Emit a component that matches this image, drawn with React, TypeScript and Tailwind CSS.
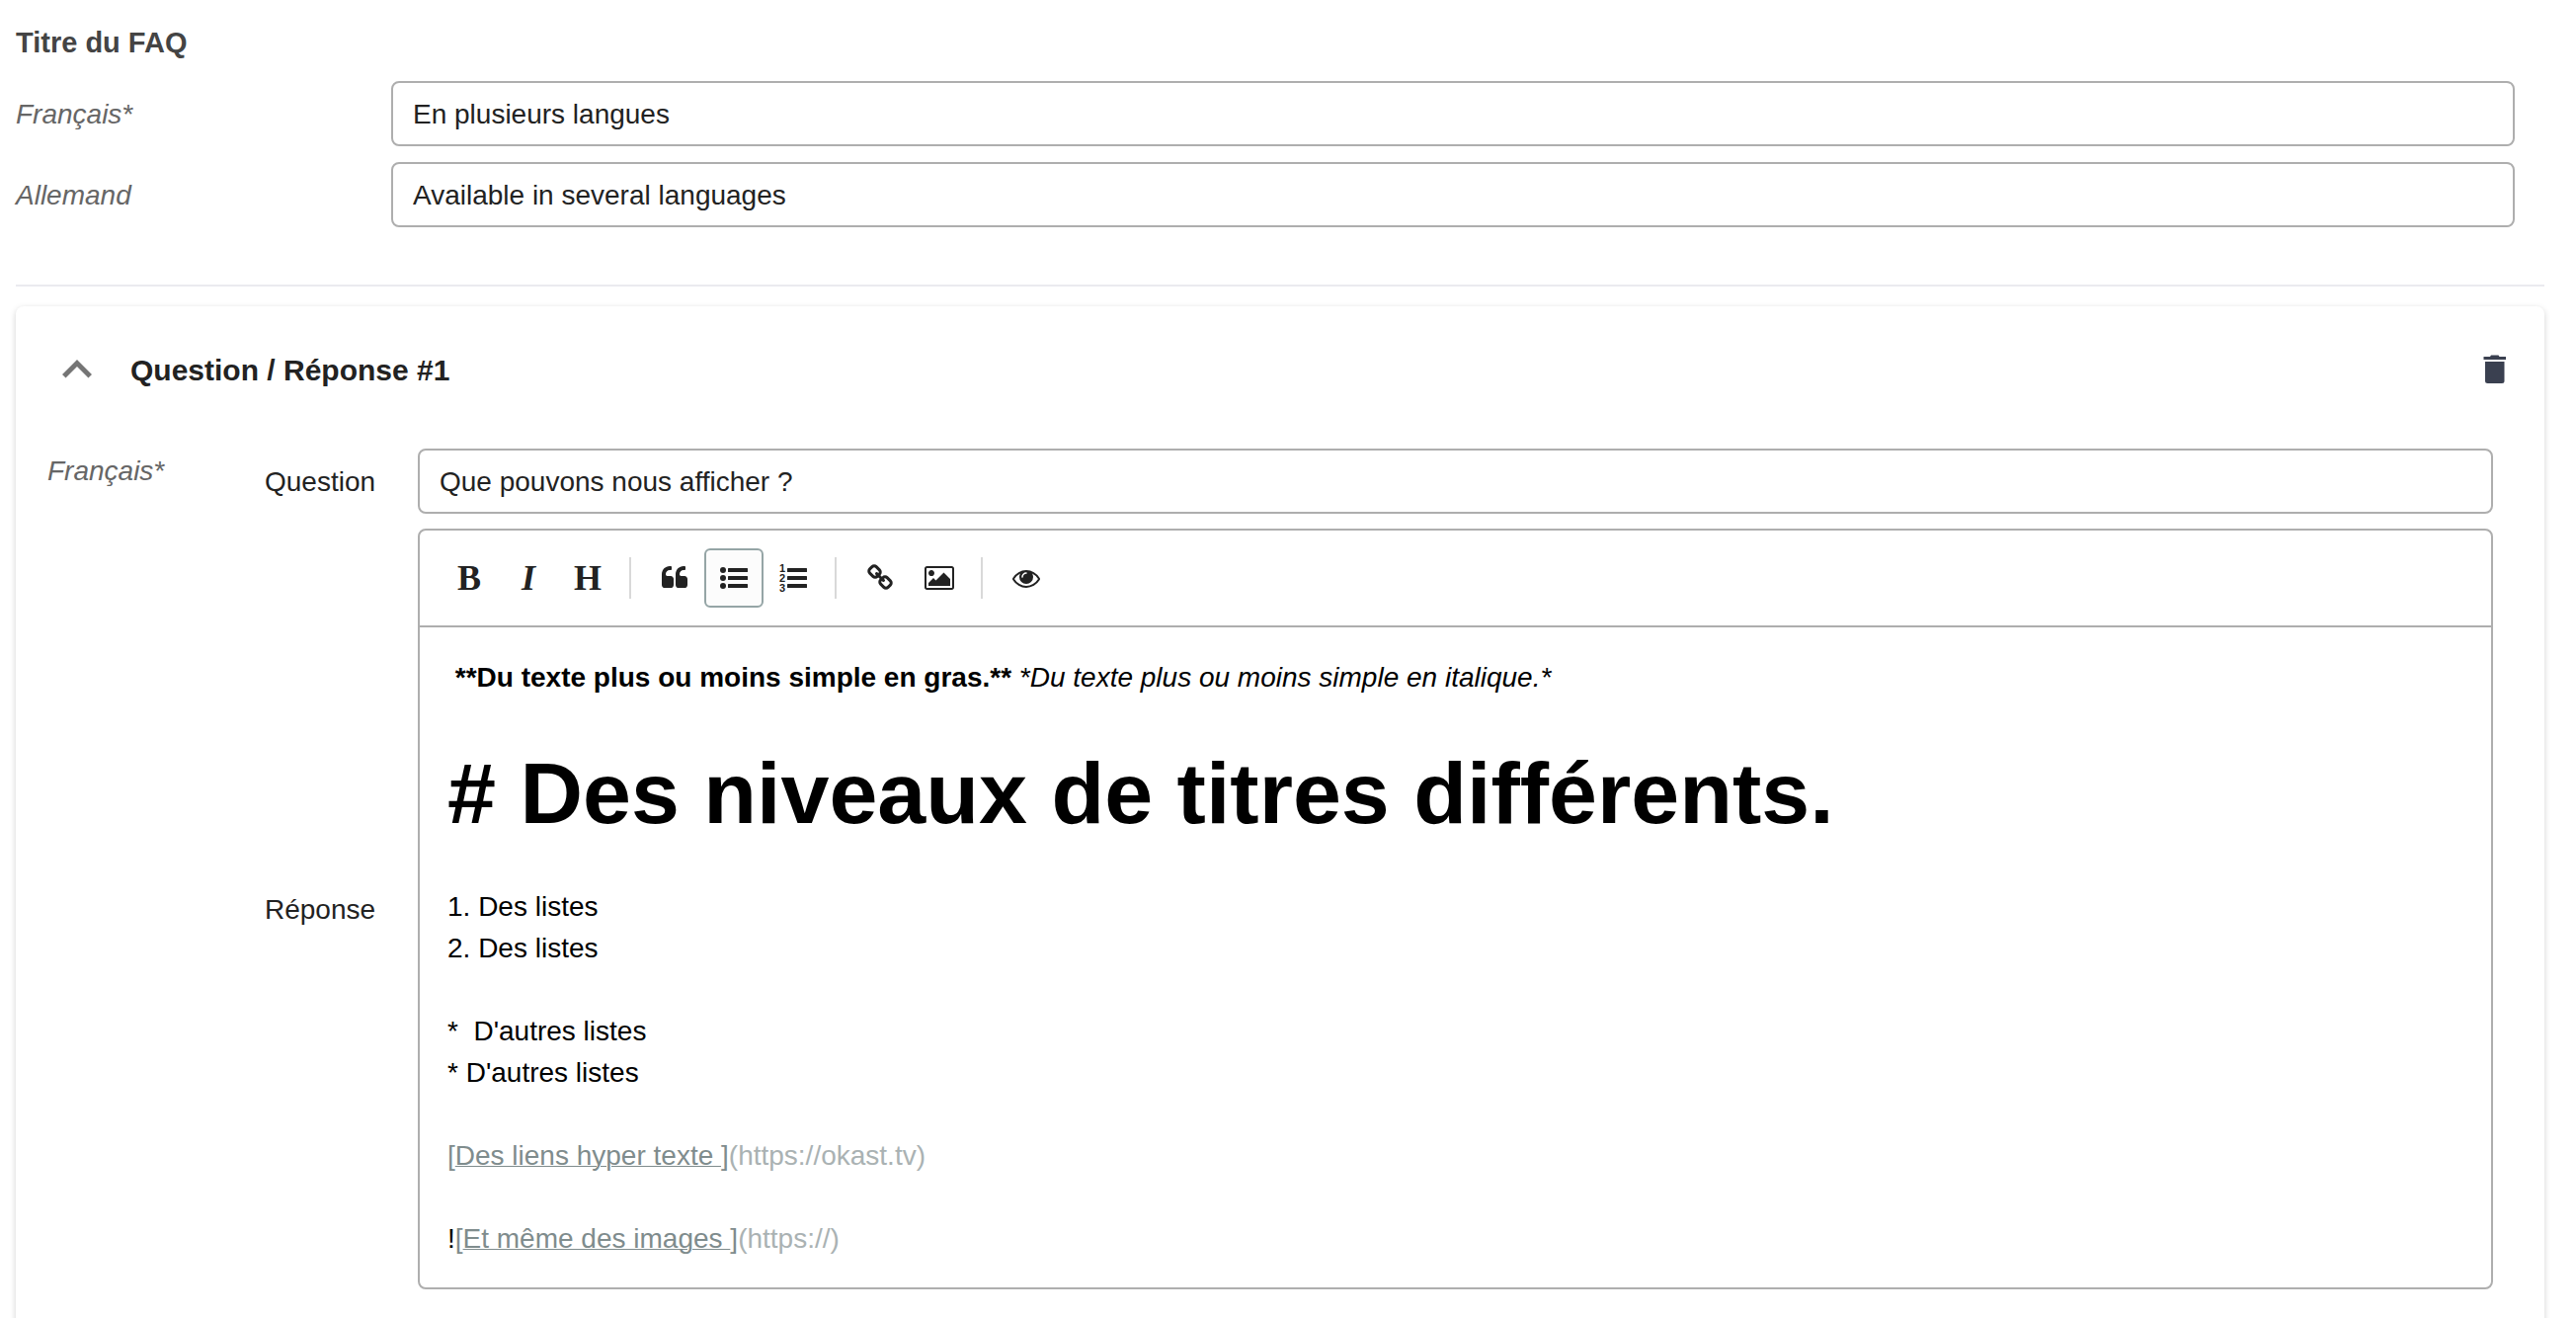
import React, { useState } from 'react';
import { MdKeyboardArrowUp } from 'react-icons/md';

const inputClass =
  'h-[66px] w-full min-w-0 rounded-lg border-2 border-[#aeaeae] bg-white px-5 pt-0.5 text-[28px] text-[#222222] outline-none';

const toolGroups = [
  [
    { id: 'bold', label: 'Gras', icon: <span className="font-['Liberation_Serif',serif] text-4xl font-bold">B</span> },
    { id: 'italic', label: 'Italique', icon: <span className="font-['Liberation_Serif',serif] text-4xl font-bold italic">I</span> },
    { id: 'heading', label: 'Titre', icon: <span className="font-['Liberation_Serif',serif] text-4xl font-bold">H</span> },
  ],
  [
    { id: 'quote', label: 'Citation', icon: <QuoteIcon /> },
    { id: 'ul', label: 'Liste à puces', icon: <BulletListIcon /> },
    { id: 'ol', label: 'Liste numérotée', icon: <NumberListIcon /> },
  ],
  [
    { id: 'link', label: 'Lien', icon: <LinkIcon /> },
    { id: 'image', label: 'Image', icon: <ImageIcon /> },
  ],
  [{ id: 'preview', label: 'Aperçu', icon: <EyeIcon /> }],
];

export default function App() {
  const [title, setTitle] = useState({
    fr: 'En plusieurs langues',
    de: 'Available in several languages',
  });

  return (
    <main className="bg-white pl-4 pr-8 pt-6 font-['Liberation_Sans',Arial,sans-serif] text-[28px] leading-[42px] text-[#222222]">
      <section className="pr-[30px]">
        <h1 className="text-[29px] font-semibold leading-[38px] text-[#444444]">Titre du FAQ</h1>
        <div className="mt-5 flex flex-col gap-4">
          <TitleRow
            id="title-fr"
            label="Français*"
            value={title.fr}
            onChange={fr => setTitle({ ...title, fr })}
          />
          <TitleRow
            id="title-de"
            label="Allemand"
            value={title.de}
            onChange={de => setTitle({ ...title, de })}
          />
        </div>
      </section>

      <hr className="mb-5 mt-[58px] border-t-2 border-[#ebebef]" />

      <QuestionCard />
    </main>
  );
}

type TitleRowProps = {
  id: string;
  label: string;
  value: string;
  onChange: (value: string) => void;
};

function TitleRow({ id, label, value, onChange }: TitleRowProps) {
  return (
    <div className="flex items-center">
      <label htmlFor={id} className="w-[380px] shrink-0 pt-0.5 italic text-[#666666]">
        {label}
      </label>
      <input
        id={id}
        type="text"
        className={inputClass}
        value={value}
        onChange={e => onChange(e.target.value)}
      />
    </div>
  );
}

function QuestionCard() {
  const [question, setQuestion] = useState('Que pouvons nous afficher ?');

  return (
    <section className="rounded-lg pb-16 pl-8 pr-[52px] pt-8 shadow-[0_2px_6px_rgba(0,0,0,0.18)]">
      <header className="flex h-16 items-center">
        <button type="button" aria-label="Replier" className="text-[#757575]">
          <MdKeyboardArrowUp className="size-[60px]" />
        </button>
        <h2 className="ml-6 flex-1 pt-0.5 text-[30px] font-bold">Question / Réponse #1</h2>
        <button type="button" aria-label="Supprimer" className="-mr-3.5 text-[#3a4050]">
          <TrashIcon />
        </button>
      </header>

      <div className="mt-12 flex">
        <p className="w-[220px] shrink-0 pt-0.5 italic text-[#666666]">Français*</p>
        <div className="flex min-w-0 flex-1 flex-col gap-[15px]">
          <div className="flex items-center">
            <label htmlFor="question" className="w-[155px] shrink-0 pt-0.5">
              Question
            </label>
            <input
              id="question"
              type="text"
              className={inputClass}
              value={question}
              onChange={e => setQuestion(e.target.value)}
            />
          </div>
          <div className="flex items-center">
            <span id="answer-label" className="w-[155px] shrink-0 pt-0.5">
              Réponse
            </span>
            <Editor />
          </div>
        </div>
      </div>
    </section>
  );
}

function Editor() {
  const [active, setActive] = useState('ul');

  return (
    <div className="min-w-0 flex-1 rounded-lg border-2 border-[#aeaeae]">
      <div className="flex h-[98px] items-center border-b-2 border-[#aeaeae] px-5">
        {toolGroups.map((group, i) => (
          <React.Fragment key={i}>
            {i > 0 && <span className="ml-3 mr-3.5 h-[42px] w-[2px] bg-[#d9d9d9]" />}
            {group.map(({ id, label, icon }) => (
              <button
                key={id}
                type="button"
                aria-label={label}
                onClick={() => setActive(id)}
                className={
                  active === id
                    ? 'flex size-[60px] items-center justify-center rounded-md border-2 border-[#95a5a6] bg-[#fcfcfc]'
                    : 'flex size-[60px] items-center justify-center rounded-md border-2 border-transparent'
                }
              >
                {icon}
              </button>
            ))}
          </React.Fragment>
        ))}
      </div>

      <div
        role="textbox"
        aria-multiline="true"
        aria-labelledby="answer-label"
        contentEditable
        suppressContentEditableWarning
        className="whitespace-pre-wrap px-7 pb-7 pt-[30px] text-black outline-none"
      >
        <p>
          {' '}
          <strong>**Du texte plus ou moins simple en gras.**</strong>{' '}
          <em>*Du texte plus ou moins simple en italique.*</em>
        </p>
        <p className="mb-10 mt-[42px] text-[88px] font-bold leading-[108px]"># Des niveaux de titres différents.</p>
        <p>1. Des listes</p>
        <p>2. Des listes</p>
        <p className="mt-[42px]">*  D'autres listes</p>
        <p>* D'autres listes</p>
        <p className="mt-[42px]">
          <LinkMarkup text="Des liens hyper texte " url="https://okast.tv" />
        </p>
        <p className="mt-[42px]">
          !<LinkMarkup text="Et même des images " url="https://" />
        </p>
      </div>
    </div>
  );
}

// Raw markdown link, highlighted as in the source view
function LinkMarkup({ text, url }: { text: string; url: string }) {
  return (
    <>
      <span className="text-[#7f8c8d]">
        [<span className="underline decoration-1">{text}</span>]
      </span>
      <span className="text-[#aab2b3]">({url})</span>
    </>
  );
}

function QuoteIcon() {
  return (
    <svg className="size-7" viewBox="0 0 1792 1792" fill="currentColor">
      <path d="M832 960v384q0 80-56 136t-136 56h-384q-80 0-136-56t-56-136v-704q0-104 40.5-198.5t109.5-163.5 163.5-109.5 198.5-40.5h64q26 0 45 19t19 45v128q0 26-19 45t-45 19h-64q-106 0-181 75t-75 181v32q0 40 28 68t68 28h224q80 0 136 56t56 136zm896 0v384q0 80-56 136t-136 56h-384q-80 0-136-56t-56-136v-704q0-104 40.5-198.5t109.5-163.5 163.5-109.5 198.5-40.5h64q26 0 45 19t19 45v128q0 26-19 45t-45 19h-64q-106 0-181 75t-75 181v32q0 40 28 68t68 28h224q80 0 136 56t56 136z" />
    </svg>
  );
}

function BulletListIcon() {
  return (
    <svg className="size-7" viewBox="0 0 28 28" fill="currentColor">
      <circle cx="3" cy="6" r="3" />
      <circle cx="3" cy="14" r="3" />
      <circle cx="3" cy="22" r="3" />
      <rect x="8" y="4" width="20" height="4" rx="0.5" />
      <rect x="8" y="12" width="20" height="4" rx="0.5" />
      <rect x="8" y="20" width="20" height="4" rx="0.5" />
    </svg>
  );
}

function NumberListIcon() {
  return (
    <svg className="size-7 overflow-visible" viewBox="0 0 28 28" fill="currentColor">
      <g className="font-['Liberation_Sans',Arial,sans-serif] text-[11px] font-bold">
        <text x="0" y="8">1</text>
        <text x="0" y="18">2</text>
        <text x="0" y="28">3</text>
      </g>
      <rect x="8" y="4" width="20" height="4" rx="0.5" />
      <rect x="8" y="12" width="20" height="4" rx="0.5" />
      <rect x="8" y="20" width="20" height="4" rx="0.5" />
    </svg>
  );
}

function LinkIcon() {
  return (
    <svg className="size-7" viewBox="0 0 1792 1792" fill="currentColor">
      <path d="M1520 1216q0-40-28-68l-208-208q-28-28-68-28-42 0-72 32 3 3 19 18.5t21.5 21.5 15 19 13 25.5 3.5 27.5q0 40-28 68t-68 28q-15 0-27.5-3.5t-25.5-13-19-15-21.5-21.5-18.5-19q-33 31-33 73 0 40 28 68l206 207q27 27 68 27 40 0 68-26l147-146q28-28 28-67zm-703-705q0-40-28-68l-206-207q-28-28-68-28-39 0-68 27l-147 146q-28 28-28 67 0 40 28 68l208 208q27 27 68 27 42 0 72-31-3-3-19-18.5t-21.5-21.5-15-19-13-25.5-3.5-27.5q0-40 28-68t68-28q15 0 27.5 3.5t25.5 13 19 15 21.5 21.5 18.5 19q33-31 33-73zm895 705q0 120-85 203l-147 146q-83 83-203 83-121 0-204-85l-206-207q-83-83-83-203 0-123 88-209l-88-88q-86 88-208 88-120 0-204-84l-208-208q-84-84-84-204t85-203l147-146q83-83 203-83 121 0 204 85l206 207q83 83 83 203 0 123-88 209l88 88q86-88 208-88 120 0 204 84l208 208q84 84 84 204z" />
    </svg>
  );
}

function ImageIcon() {
  return (
    <svg className="h-7 w-[30px]" viewBox="0 0 1920 1792" fill="currentColor">
      <path d="M640 576q0 80-56 136t-136 56-136-56-56-136 56-136 136-56 136 56 56 136zm1024 384v448h-1408v-192l320-320 160 160 512-512zm96-704h-1600q-13 0-22.5 9.5t-9.5 22.5v1216q0 13 9.5 22.5t22.5 9.5h1600q13 0 22.5-9.5t9.5-22.5v-1216q0-13-9.5-22.5t-22.5-9.5zm160 32v1216q0 66-47 113t-113 47h-1600q-66 0-113-47t-47-113v-1216q0-66 47-113t113-47h1600q66 0 113 47t47 113z" />
    </svg>
  );
}

function EyeIcon() {
  return (
    <svg className="size-7" viewBox="0 0 1792 1792" fill="currentColor">
      <path d="M1664 960q-152-236-381-353 61 104 61 225 0 185-131.5 316.5t-316.5 131.5-316.5-131.5-131.5-316.5q0-121 61-225-229 117-381 353 133 205 333.5 326.5t434.5 121.5 434.5-121.5 333.5-326.5zm-720-384q0-20-14-34t-34-14q-125 0-214.5 89.5t-89.5 214.5q0 20 14 34t34 14 34-14 14-34q0-86 61-147t147-61q20 0 34-14t14-34zm848 384q0 34-20 69-140 230-376.5 368.5t-499.5 138.5-499.5-139-376.5-368q-20-35-20-69t20-69q140-229 376.5-368t499.5-139 499.5 139 376.5 368q20 35 20 69z" />
    </svg>
  );
}

function TrashIcon() {
  return (
    <svg className="h-[30px] w-6" viewBox="0 0 24 30" fill="currentColor">
      <path d="M0.5 2H7L8 0.5H15.500L16.500 2H23V5H0.500Z" />
      <path d="M2 7H21.500V26.500Q21.500 29 19 29H4.500Q2 29 2 26.500Z" />
    </svg>
  );
}
